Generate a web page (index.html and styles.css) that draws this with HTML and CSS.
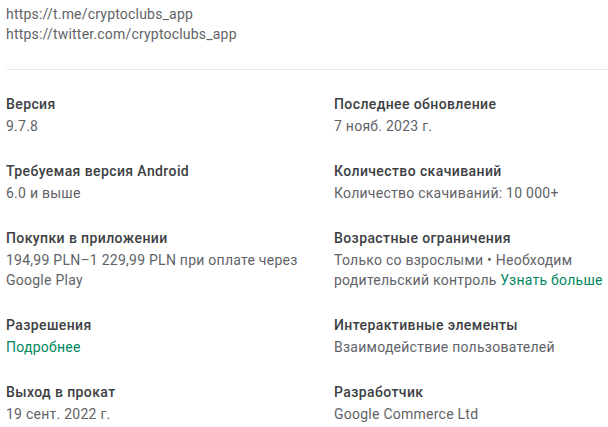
FILE: index.html
```html
<!DOCTYPE html>
<html lang="ru">
<head>
    <meta charset="UTF-8">
    <meta name="viewport" content="width=device-width, initial-scale=1.0">
    <title>Информация о приложении</title>
    <link rel="stylesheet" href="styles.css">
</head>
<body>
    <div class="page">
        <div class="links">
            <div>https://t.me/cryptoclubs_app</div>
            <div>https://twitter.com/cryptoclubs_app</div>
        </div>

        <hr class="divider">

        <div class="info-grid">
            <div class="item">
                <div class="label">Версия</div>
                <div class="value">9.7.8</div>
            </div>
            <div class="item">
                <div class="label">Последнее обновление</div>
                <div class="value">7 нояб. 2023 г.</div>
            </div>
            <div class="item">
                <div class="label">Требуемая версия Android</div>
                <div class="value">6.0 и выше</div>
            </div>
            <div class="item">
                <div class="label">Количество скачиваний</div>
                <div class="value">Количество скачиваний: 10 000+</div>
            </div>
            <div class="item">
                <div class="label">Покупки в приложении</div>
                <div class="value">194,99 PLN–1 229,99 PLN при оплате через Google Play</div>
            </div>
            <div class="item">
                <div class="label">Возрастные ограничения</div>
                <div class="value">Только со взрослыми • Необходим родительский контроль <a href="#" class="link">Узнать больше</a></div>
            </div>
            <div class="item">
                <div class="label">Разрешения</div>
                <div class="value"><a href="#" class="link">Подробнее</a></div>
            </div>
            <div class="item">
                <div class="label">Интерактивные элементы</div>
                <div class="value">Взаимодействие пользователей</div>
            </div>
            <div class="item">
                <div class="label">Выход в прокат</div>
                <div class="value">19 сент. 2022 г.</div>
            </div>
            <div class="item">
                <div class="label">Разработчик</div>
                <div class="value">Google Commerce Ltd</div>
            </div>
        </div>
    </div>
</body>
</html>
```

FILE: styles.css
```css
* {
    box-sizing: border-box;
    margin: 0;
    padding: 0;
}

body {
    background: #fff;
    font-family: Roboto, "Noto Sans", Arial, sans-serif;
    font-size: 14px;
    line-height: 20px;
    letter-spacing: 0.2px;
    color: #5f6368;
}

.page {
    padding: 4px 0 0 6px;
}

.links {
    color: #5f6368;
}

.divider {
    border: none;
    border-top: 1px solid #e8eaed;
    margin: 25px 0 24px;
}

.info-grid {
    display: grid;
    grid-template-columns: 328px 1fr;
    row-gap: 25px;
}

.label {
    color: #3c4043;
    font-weight: 500;
    letter-spacing: 0.4px;
}

.value {
    margin-top: 2px;
    color: #5f6368;
    letter-spacing: 0.25px;
}

.link {
    color: #01875f;
    text-decoration: none;
}
```
